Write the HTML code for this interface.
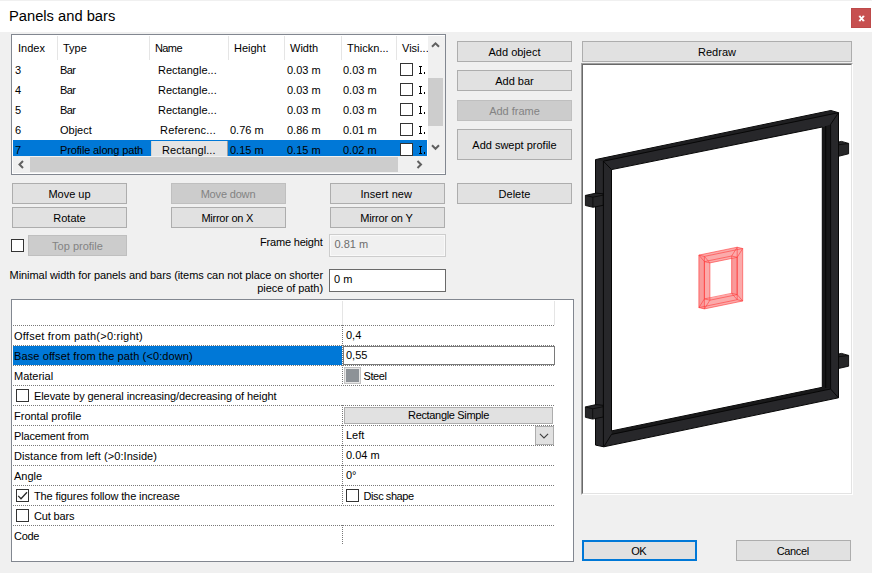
<!DOCTYPE html>
<html><head><meta charset="utf-8">
<style>
html,body{margin:0;padding:0;}
body{width:872px;height:573px;overflow:hidden;background:#f0f0f0;font-family:"Liberation Sans",sans-serif;font-size:11px;color:#000;position:relative;}
.a{position:absolute;white-space:nowrap;}
.t{position:absolute;white-space:nowrap;line-height:16px;height:16px;}
.btn{position:absolute;box-sizing:border-box;background:#e1e1e1;border:1px solid #adadad;text-align:center;line-height:20px;white-space:nowrap;}
.btn.dis{background:#cccccc;border-color:#bfbfbf;color:#838383;}
.cb{position:absolute;box-sizing:border-box;width:13px;height:13px;background:#fff;border:1px solid #333;}
.I{position:absolute;width:1px;height:8px;background:#000;}
.I:before{content:"";position:absolute;left:-1px;top:0;width:3px;height:8px;border-top:1px solid #000;border-bottom:1px solid #000;box-sizing:border-box;}
.I:after{content:"";position:absolute;left:4px;top:6px;width:1px;height:2px;background:#000;}
.hd{position:absolute;top:36px;width:1px;height:24px;background:#e5e5e5;}
.dot{position:absolute;height:1px;left:13px;width:541px;background-image:linear-gradient(to right,#787878 50%,transparent 50%);background-size:2px 1px;}
.vdot{position:absolute;width:1px;left:342px;background-image:linear-gradient(to bottom,#787878 50%,transparent 50%);background-size:1px 2px;}
</style></head><body>
<!-- title bar -->
<div class="a" style="left:0;top:0;width:872px;height:32px;background:#fff;"></div>
<div class="a" style="left:0;top:0;width:872px;height:1px;background:#f0f0f0;"></div>
<div class="a" id="title" style="left:8.6px;top:6.33px;font-size:15.2px;line-height:20px;transform-origin:0 0;transform:scale(0.968,1);">Panels and bars</div>
<div class="a" style="left:851px;top:8px;width:20px;height:20px;background:#c75050;box-sizing:border-box;border:1px solid #bd4a4a;"></div>
<svg class="a" style="left:851px;top:8px" width="20" height="20"><path d="M8.4 8.1 L12.8 12.9 M12.8 8.1 L8.4 12.9" stroke="#fff" stroke-width="1.7" fill="none"/><path d="M7.8 8.3 H10 M11.2 8.3 H13.4 M7.8 12.7 H10 M11.2 12.7 H13.4" stroke="#fff" stroke-width="0.9" fill="none"/></svg>

<!-- list -->
<div class="a" id="list" style="left:11px;top:34px;width:435px;height:141px;box-sizing:border-box;border:1px solid #828790;background:#fff;"></div>
<div class="hd" style="left:57px"></div><div class="hd" style="left:149px"></div><div class="hd" style="left:228px"></div><div class="hd" style="left:284px"></div><div class="hd" style="left:341px"></div><div class="hd" style="left:396px"></div>
<div class="t" style="left:18px;top:40px">Index</div>
<div class="t" style="left:63px;top:40px">Type</div>
<div class="t" style="left:155px;top:40px;letter-spacing:-0.6px">Name</div>
<div class="t" style="left:234px;top:40px">Height</div>
<div class="t" style="left:290px;top:40px">Width</div>
<div class="t" style="left:347px;top:40px">Thickn...</div>
<div class="t" style="left:402px;top:40px">Visi...</div>
<!-- selected row -->
<div class="a" style="left:13px;top:140px;width:414px;height:16px;background:#0078d7;"></div>
<div class="a" style="left:151px;top:141px;width:77px;height:15px;background:#e4e4e4;border-right:1px solid #a0a0a0;border-left:1px solid #d4d4d4;box-sizing:border-box;"></div>
<div id="rows" class="a" style="left:0;top:0;width:427px;height:156px;overflow:hidden;"><div class="t" style="left:15px;top:62px">3</div>
<div class="t" style="left:60px;top:62px;letter-spacing:-0.6px">Bar</div>
<div class="t" style="left:158px;top:62px">Rectangle...</div>
<div class="t" style="left:287px;top:62px">0.03 m</div>
<div class="t" style="left:343px;top:62px">0.03 m</div>
<div class="cb" style="left:400px;top:63px"></div>
<div class="I" style="left:420px;top:66px"></div>
<div class="t" style="left:15px;top:82px">4</div>
<div class="t" style="left:60px;top:82px;letter-spacing:-0.6px">Bar</div>
<div class="t" style="left:158px;top:82px">Rectangle...</div>
<div class="t" style="left:287px;top:82px">0.03 m</div>
<div class="t" style="left:343px;top:82px">0.03 m</div>
<div class="cb" style="left:400px;top:83px"></div>
<div class="I" style="left:420px;top:86px"></div>
<div class="t" style="left:15px;top:102px">5</div>
<div class="t" style="left:60px;top:102px;letter-spacing:-0.6px">Bar</div>
<div class="t" style="left:158px;top:102px">Rectangle...</div>
<div class="t" style="left:287px;top:102px">0.03 m</div>
<div class="t" style="left:343px;top:102px">0.03 m</div>
<div class="cb" style="left:400px;top:103px"></div>
<div class="I" style="left:420px;top:106px"></div>
<div class="t" style="left:15px;top:122px">6</div>
<div class="t" style="left:60px;top:122px">Object</div>
<div class="t" style="left:160px;top:122px;letter-spacing:0.2px">Referenc...</div>
<div class="t" style="left:230px;top:122px">0.76 m</div>
<div class="t" style="left:287px;top:122px">0.86 m</div>
<div class="t" style="left:343px;top:122px">0.01 m</div>
<div class="cb" style="left:400px;top:123px"></div>
<div class="I" style="left:420px;top:126px"></div>
<div class="t" style="left:15px;top:142px">7</div>
<div class="t" style="left:60px;top:142px;letter-spacing:-0.14px">Profile along path</div>
<div class="t" style="left:162px;top:142px;letter-spacing:0.1px">Rectangl...</div>
<div class="t" style="left:230px;top:142px">0.15 m</div>
<div class="t" style="left:287px;top:142px">0.15 m</div>
<div class="t" style="left:343px;top:142px">0.02 m</div>
<div class="cb" style="left:400px;top:143px"></div>
<div class="I" style="left:420px;top:146px"></div></div>
<!-- scrollbars -->
<div class="a" style="left:428px;top:36px;width:17px;height:137px;background:#f0f0f0;"></div>
<div class="a" style="left:428px;top:78px;width:15px;height:48px;background:#cdcdcd;"></div>
<div class="a" style="left:13px;top:156px;width:431px;height:17px;background:#f0f0f0;"></div>
<div class="a" style="left:30px;top:157px;width:368px;height:15px;background:#cdcdcd;"></div>
<svg class="a" style="left:427px;top:36px" width="17" height="120"><path d="M5 10.8 L8.5 7.3 L12 10.8" stroke="#606060" stroke-width="2" fill="none"/><path d="M5 109.3 L8.5 112.8 L12 109.3" stroke="#606060" stroke-width="2" fill="none"/></svg>
<svg class="a" style="left:13px;top:156px" width="414" height="17"><path d="M10 5 L6.5 8.5 L10 12" stroke="#606060" stroke-width="2" fill="none"/><path d="M404.5 5 L408 8.5 L404.5 12" stroke="#606060" stroke-width="2" fill="none"/></svg>

<!-- buttons left -->
<div class="btn" style="left:12px;top:183px;width:115px;height:21px;">Move up</div>
<div class="btn dis" style="left:171px;top:183px;width:115px;height:21px;letter-spacing:-0.17px;text-indent:-1px">Move down</div>
<div class="btn" style="left:330px;top:183px;width:115px;height:21px;letter-spacing:0.1px;text-indent:-2.5px">Insert new</div>
<div class="btn" style="left:12px;top:207px;width:115px;height:21px;">Rotate</div>
<div class="btn" style="left:171px;top:207px;width:115px;height:21px;letter-spacing:-0.25px;text-indent:-2.5px">Mirror on X</div>
<div class="btn" style="left:330px;top:207px;width:115px;height:21px;letter-spacing:-0.17px;text-indent:-2px">Mirror on Y</div>
<div class="cb" style="left:11px;top:239px"></div>
<div class="btn dis" style="left:28px;top:235px;width:99px;height:21px;">Top profile</div>
<div class="t" id="fh" style="right:549.5px;top:234px;letter-spacing:-0.2px">Frame height</div>
<div class="a" style="left:329px;top:234px;width:117px;height:23px;box-sizing:border-box;border:1px solid #cdcdcd;background:#f0f0f0;box-shadow:inset 0 0 0 1px #f9f9f9;"></div>
<div class="t" style="left:334.5px;top:236px;color:#6d6d6d">0.81 m</div>
<div class="a" id="mw" style="right:549px;top:269px;letter-spacing:-0.07px;text-align:right;line-height:13px;white-space:nowrap;">Minimal width for panels and bars (items can not place on shorter<br>piece of path)</div>
<div class="a" style="left:329px;top:269px;width:117px;height:23px;box-sizing:border-box;border:1px solid #6a6a6a;background:#fff;"></div>
<div class="t" style="left:334px;top:271px">0 m</div>

<!-- right buttons -->
<div class="btn" style="left:457px;top:41px;width:115px;height:21px;">Add object</div>
<div class="btn" style="left:457px;top:70px;width:115px;height:21px;">Add bar</div>
<div class="btn dis" style="left:457px;top:100px;width:115px;height:21px;">Add frame</div>
<div class="btn" style="left:457px;top:129px;width:115px;height:31px;line-height:31px;">Add swept profile</div>
<div class="btn" style="left:457px;top:183px;width:115px;height:21px;">Delete</div>
<div class="btn" style="left:582px;top:41px;width:270px;height:21px;">Redraw</div>
<div class="btn" style="left:582px;top:540px;width:115px;height:21px;border:2px solid #0078d7;line-height:18px;letter-spacing:-0.5px;text-indent:-1.5px">OK</div>
<div class="btn" style="left:736px;top:540px;width:115px;height:21px;letter-spacing:-0.38px;text-indent:-1.5px">Cancel</div>

<!-- property grid -->
<div class="a" style="left:11px;top:299px;width:563px;height:263px;box-sizing:border-box;border:1px solid #828790;background:#fff;"></div>
<div id="pg"><div class="dot" style="top:325px"></div>
<div class="dot" style="top:345px"></div>
<div class="dot" style="top:365px"></div>
<div class="dot" style="top:385px"></div>
<div class="dot" style="top:405px"></div>
<div class="dot" style="top:425px"></div>
<div class="dot" style="top:445px"></div>
<div class="dot" style="top:465px"></div>
<div class="dot" style="top:485px"></div>
<div class="dot" style="top:505px"></div>
<div class="dot" style="top:525px"></div>
<div class="vdot" style="top:325px;height:60px"></div>
<div class="vdot" style="top:405px;height:100px"></div>
<div class="vdot" style="top:525px;height:20px"></div>
<div class="a" style="left:342px;top:301px;width:1px;height:24px;background:#e5e5e5"></div>
<div class="a" style="left:554px;top:301px;width:1px;height:24px;background:#e5e5e5"></div>
<div class="a" style="left:13px;top:346px;width:329px;height:19px;background:#0078d7"></div>
<div class="a" style="left:343px;top:346px;width:212px;height:19px;box-sizing:border-box;border:1px solid #7a7a7a;background:#fff"></div>
<div class="t" style="left:14px;top:328px;letter-spacing:0.23px">Offset from path(>0:right)</div>
<div class="t" style="left:14px;top:348px;letter-spacing:0.11px">Base offset from the path (&lt;0:down)</div>
<div class="t" style="left:14px;top:368px">Material</div>
<div class="t" style="left:14px;top:408px">Frontal profile</div>
<div class="t" style="left:14px;top:428px;letter-spacing:-0.16px">Placement from</div>
<div class="t" style="left:14px;top:448px;letter-spacing:0.07px">Distance from left (>0:Inside)</div>
<div class="t" style="left:14px;top:468px">Angle</div>
<div class="t" style="left:14px;top:528px;letter-spacing:-0.3px">Code</div>
<div class="cb" style="left:16px;top:389px"></div>
<div class="t" style="left:34px;top:388px;letter-spacing:-0.08px">Elevate by general increasing/decreasing of height</div>
<div class="cb" style="left:16px;top:489px"></div>
<div class="t" style="left:34px;top:488px;letter-spacing:-0.11px">The figures follow the increase</div>
<div class="cb" style="left:16px;top:509px"></div>
<div class="t" style="left:34px;top:508px;letter-spacing:-0.14px">Cut bars</div>
<svg class="a" style="left:16px;top:489px" width="13" height="13"><path d="M2.2 6.9 L5 9.7 L11 3.3" stroke="#2a2a2a" stroke-width="1.3" fill="none"/></svg>
<div class="cb" style="left:346px;top:489px"></div>
<div class="t" style="left:363.5px;top:488px;letter-spacing:-0.42px">Disc shape</div>
<div class="t" style="left:346px;top:327px">0,4</div>
<div class="t" style="left:346px;top:347px">0,55</div>
<div class="t" style="left:346px;top:427px">Left</div>
<div class="t" style="left:346px;top:447px">0.04 m</div>
<div class="t" style="left:346px;top:467px">0°</div>
<div class="a" style="left:344px;top:367px;width:17px;height:17px;box-sizing:border-box;border:1px solid #c4c4c4;background:#e6e6e6"></div><div class="a" style="left:346px;top:369px;width:13px;height:13px;background:#8d9297"></div>
<div class="t" style="left:363.5px;top:368px;letter-spacing:-0.4px">Steel</div>
<div class="btn" style="left:344px;top:407px;width:209px;height:17px;line-height:15px;letter-spacing:-0.33px;">Rectangle Simple</div>
<div class="btn" style="left:535px;top:426px;width:19px;height:19px;"></div>
<svg class="a" style="left:535px;top:426px" width="19" height="19"><path d="M4.9 7.8 L9 11.9 L13.1 7.8" stroke="#404040" stroke-width="1.1" fill="none"/></svg></div>

<!-- preview -->
<div class="a" style="left:581px;top:63px;width:272px;height:432px;box-sizing:border-box;background:#fff;border:1px solid;border-color:#a0a0a0 #fff #fff #a0a0a0;"></div>
<div class="a" style="left:582px;top:64px;width:270px;height:430px;box-sizing:border-box;background:#fff;border:1px solid;border-color:#696969 #e3e3e3 #e3e3e3 #696969;"></div>
<svg class="a" id="pv" style="left:582px;top:63px" width="270" height="431" viewBox="582 63 270 431">
<g shape-rendering="geometricPrecision">
<!-- frame silhouette with hole -->
<path fill-rule="evenodd" fill="#27272a" stroke="#060606" stroke-width="1" stroke-linejoin="miter" d="M595.5 159.6 L830.8 110.5 L838.5 112.7 L838.5 397.8 L603.8 446.8 L595.5 445.1 Z M611.5 169.6 L822.3 127 L822.3 387.3 L611.5 430.9 Z"/>
<!-- right inner face -->
<path d="M822.8 127.3 L830.5 124.5 L830.5 388.8 L822.8 387.4 Z" fill="#171718"/>
<!-- top face of top bar -->
<path d="M596 159.8 L830.8 110.8 L838 112.9 L603.4 161.3 Z" fill="#1f1f21"/>
<!-- top face of bottom bar -->
<path d="M611.8 431.1 L822.3 387.6 L830.3 389 L611.8 434.4 Z" fill="#19191a"/>
<!-- edges -->
<path d="M603.4 161.2 L603.4 446.6 M603.4 161.2 L611.5 169.6 M838.5 112.7 L830.6 124.4 M830.6 124.4 L830.6 389 M830.6 389 L838.5 397.8 M611.5 434.4 L603.8 446.8 M603.4 161.2 L838.5 112.7 M611.5 434.4 L830.6 389 M825.7 126 L825.7 388" stroke="#050505" stroke-width="0.9" fill="none"/>
<!-- tabs -->
<g fill="#262628" stroke="#070707" stroke-width="0.9" stroke-linejoin="round">
<path d="M585.4 195.4 L596 193.1 L603.2 193.8 L603.2 205.3 L593.1 207.3 L585.4 205.5 Z"/>
<path d="M585.4 406.9 L596 404.6 L603.2 405.3 L603.2 417 L592.6 419.1 L585.4 417.3 Z"/>
<path d="M838.5 142 L841.5 141.4 L848.6 143.4 L848.6 153.8 L838.5 156.3 Z"/>
<path d="M838.5 354 L841.5 353.4 L848.6 355.4 L848.6 366.2 L838.5 368.5 Z"/>
</g>
<path d="M592.9 197.2 L592.9 207.2 M592.9 197.2 L585.4 195.4 M592.9 197.2 L603.2 195.1 M592.7 408.8 L592.7 419 M592.7 408.8 L585.4 406.9 M592.7 408.8 L603.2 406.7 M838.5 144.8 L848.6 143.4 M838.5 356.8 L848.6 355.4" stroke="#070707" stroke-width="0.8" fill="none"/>
<!-- red profile -->
<path fill-rule="evenodd" fill="#fbaaaa" d="M698.9 255.1 L737.2 247.2 L742.7 248.5 L742.7 301 L704.4 308.9 L698.9 307.6 Z M709.9 262.9 L731.7 258.4 L731.7 293.7 L709.9 298.2 Z"/>
<path fill="#f99a9a" d="M698.9 255.1 L704.4 256.4 L704.4 308.9 L698.9 307.6 Z M731.7 258.4 L737.2 257.3 L737.2 294.6 L731.7 293.7 Z"/>
<g stroke="#ff3a3a" stroke-width="0.7" fill="none" stroke-opacity="0.85">
<path d="M698.9 255.1 L737.2 247.2 L737.2 299.7 L698.9 307.6 Z"/>
<path d="M704.4 256.4 L742.7 248.5 L742.7 301 L704.4 308.9 Z"/>
<path d="M709.9 262.9 L737.2 257.3 L737.2 294.6 L709.9 300.2 Z"/>
<path d="M704.4 261.6 L731.7 256 L731.7 293.3 L704.4 298.9 Z"/>
<path d="M698.9 255.1 L704.4 256.4 M737.2 247.2 L742.7 248.5 M737.2 299.7 L742.7 301 M698.9 307.6 L704.4 308.9 M704.4 261.6 L709.9 262.9 M731.7 256 L737.2 257.3 M731.7 293.3 L737.2 294.6 M704.4 298.9 L709.9 300.2"/>
<path d="M704.4 256.4 L709.9 262.9 M742.7 248.5 L737.2 257.3 M742.7 301 L737.2 294.6 M704.4 308.9 L709.9 300.2 M698.9 255.1 L704.4 261.6 M737.2 247.2 L731.7 256 M737.2 299.7 L731.7 293.3 M698.9 307.6 L704.4 298.9"/>
</g>
</g>
</svg>
</body></html>
